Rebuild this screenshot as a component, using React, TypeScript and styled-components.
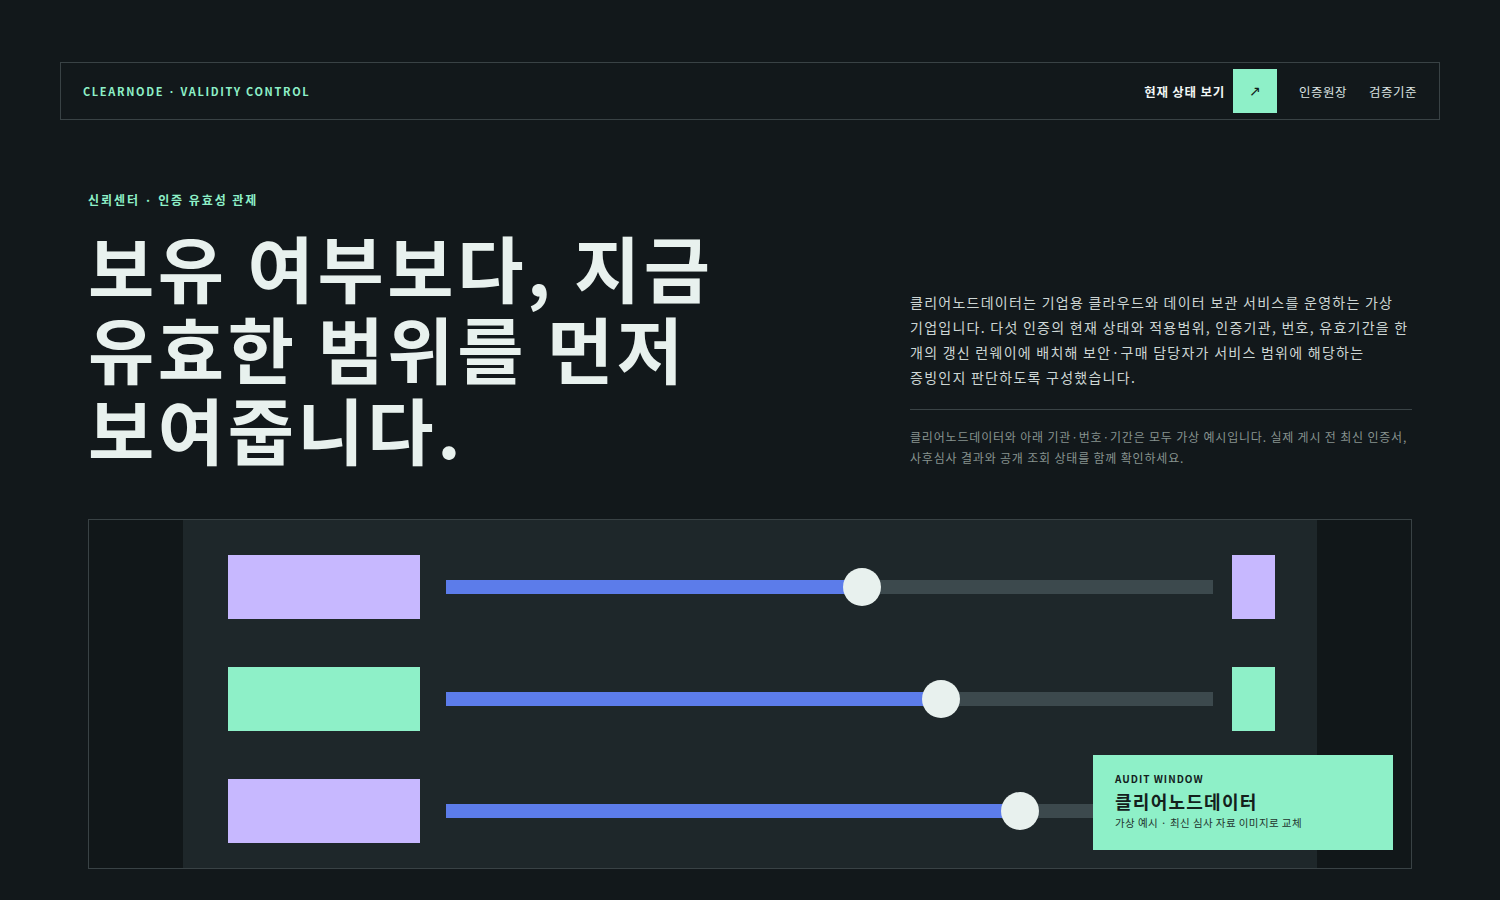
import React from 'react';
import styled, { createGlobalStyle } from 'styled-components';

const GlobalStyle = createGlobalStyle`
  * {
    box-sizing: border-box;
  }

  body {
    margin: 0;
    background: #12181b;
    color: #eef3f1;
    font-family: "Noto Sans CJK KR", "Noto Sans", "Liberation Sans", sans-serif;
    word-break: keep-all;
  }
`;

const Page = styled.div`
  padding: 62px 60px 0;
  min-height: 900px;
`;

const Header = styled.header`
  display: flex;
  align-items: center;
  justify-content: space-between;
  height: 58px;
  padding: 0 22px;
  border: 1px solid #394245;
`;

const Brand = styled.div`
  font-size: 11px;
  font-weight: 700;
  letter-spacing: 0.15em;
  color: #8ef0c8;
`;

const Nav = styled.nav`
  display: flex;
  align-items: center;
`;

const StatusLink = styled.a`
  font-size: 12.5px;
  font-weight: 700;
  letter-spacing: 0.06em;
  color: #f1f5f4;
  margin-right: 8px;
`;

const ArrowButton = styled.button`
  width: 44px;
  height: 44px;
  border: none;
  background: #8ef0c8;
  color: #12201b;
  font-size: 14px;
  font-family: "DejaVu Sans", sans-serif;
  display: flex;
  align-items: center;
  justify-content: center;
  margin-right: 22px;
  cursor: pointer;
`;

const NavLink = styled.a`
  font-size: 12.5px;
  letter-spacing: 0.04em;
  color: #dbe3e1;

  & + & {
    margin-left: 22px;
  }
`;

const Hero = styled.section`
  padding: 0 28px;
  margin-top: 71px;
`;

const Eyebrow = styled.div`
  font-size: 12px;
  font-weight: 700;
  letter-spacing: 0.16em;
  color: #8ef0c8;
`;

const HeroGrid = styled.div`
  display: grid;
  grid-template-columns: 1fr 502px;
  align-items: end;
  margin-top: 17px;
`;

const Headline = styled.h1`
  margin: 0;
  font-size: 72px;
  line-height: 81px;
  font-weight: 700;
  letter-spacing: 0.05em;
  color: #e8f1ee;
`;

const Aside = styled.div`
  display: flex;
  flex-direction: column;
`;

const Lead = styled.p`
  margin: 0;
  font-size: 14px;
  line-height: 25px;
  letter-spacing: 0.09em;
  color: #cdd6d4;
`;

const Divider = styled.hr`
  border: none;
  border-top: 1px solid #3a4346;
  margin: 19px 0 16px;
`;

const Note = styled.p`
  margin: 0;
  font-size: 12px;
  line-height: 21px;
  letter-spacing: 0.068em;
  color: #87938f;
`;

const Panel = styled.section`
  position: relative;
  display: flex;
  justify-content: center;
  height: 350px;
  margin: 51px 28px 0;
  border: 1px solid #394245;
  background: #111719;
  overflow: hidden;
`;

const Stage = styled.div`
  flex: 0 0 1134px;
  display: flex;
  flex-direction: column;
  gap: 48px;
  padding: 35px 42px 0 45px;
  background: #1e272a;
`;

const Row = styled.div`
  display: grid;
  grid-template-columns: 192px 1fr 43px;
  align-items: center;
  height: 64px;
`;

const Swatch = styled.div<{ $tone: 'lavender' | 'mint' }>`
  height: 64px;
  background: ${({ $tone }) => ($tone === 'mint' ? '#8ef0c8' : '#c7b8ff')};
`;

const Track = styled.div`
  position: relative;
  height: 14px;
  margin: 0 19px 0 26px;
  background: #3c494d;
`;

const Fill = styled.div`
  height: 100%;
  background: #5c7cea;
`;

const Thumb = styled.span`
  position: absolute;
  top: 50%;
  width: 38px;
  height: 38px;
  border-radius: 50%;
  background: #e8f1ee;
  transform: translate(-50%, -50%);
`;

const AuditCard = styled.aside`
  position: absolute;
  right: 18px;
  bottom: 18px;
  width: 300px;
  height: 95px;
  padding: 17px 22px;
  background: #8ef0c8;
  color: #13201c;
`;

const AuditLabel = styled.div`
  font-size: 10px;
  line-height: 14px;
  font-weight: 700;
  letter-spacing: 0.1em;
`;

const AuditTitle = styled.div`
  font-size: 18px;
  line-height: 24px;
  font-weight: 700;
  letter-spacing: 0.07em;
  margin-top: 3px;
`;

const AuditSub = styled.div`
  font-size: 10.5px;
  line-height: 16px;
  letter-spacing: 0.04em;
  color: #22332d;
  margin-top: 2px;
`;

const rows: { tone: 'lavender' | 'mint'; value: number }[] = [
  { tone: 'lavender', value: 54.2 },
  { tone: 'mint', value: 64.5 },
  { tone: 'lavender', value: 74.9 },
];

const App: React.FC = () => {
  return (
    <Page>
      <GlobalStyle />
      <Header>
        <Brand>CLEARNODE · VALIDITY CONTROL</Brand>
        <Nav>
          <StatusLink>현재 상태 보기</StatusLink>
          <ArrowButton aria-label="현재 상태 보기">↗</ArrowButton>
          <NavLink>인증원장</NavLink>
          <NavLink>검증기준</NavLink>
        </Nav>
      </Header>

      <Hero>
        <Eyebrow>신뢰센터 · 인증 유효성 관제</Eyebrow>
        <HeroGrid>
          <Headline>
            보유 여부보다, 지금
            <br />
            유효한 범위를 먼저
            <br />
            보여줍니다.
          </Headline>
          <Aside>
            <Lead>
              클리어노드데이터는 기업용 클라우드와 데이터 보관 서비스를 운영하는 가상 기업입니다. 다섯 인증의 현재
              상태와 적용범위, 인증기관, 번호, 유효기간을 한 개의 갱신 런웨이에 배치해 보안·구매 담당자가 서비스
              범위에 해당하는 증빙인지 판단하도록 구성했습니다.
            </Lead>
            <Divider />
            <Note>
              클리어노드데이터와 아래 기관·번호·기간은 모두 가상 예시입니다. 실제 게시 전 최신 인증서, 사후심사
              결과와 공개 조회 상태를 함께 확인하세요.
            </Note>
          </Aside>
        </HeroGrid>
      </Hero>

      <Panel>
        <Stage>
          {rows.map((row, i) => (
            <Row key={i}>
              <Swatch $tone={row.tone} />
              <Track>
                <Fill style={{ width: `${row.value}%` }} />
                <Thumb style={{ left: `${row.value}%` }} />
              </Track>
              <Swatch $tone={row.tone} />
            </Row>
          ))}
        </Stage>
        <AuditCard>
          <AuditLabel>AUDIT WINDOW</AuditLabel>
          <AuditTitle>클리어노드데이터</AuditTitle>
          <AuditSub>가상 예시 · 최신 심사 자료 이미지로 교체</AuditSub>
        </AuditCard>
      </Panel>
    </Page>
  );
};

export default App;
